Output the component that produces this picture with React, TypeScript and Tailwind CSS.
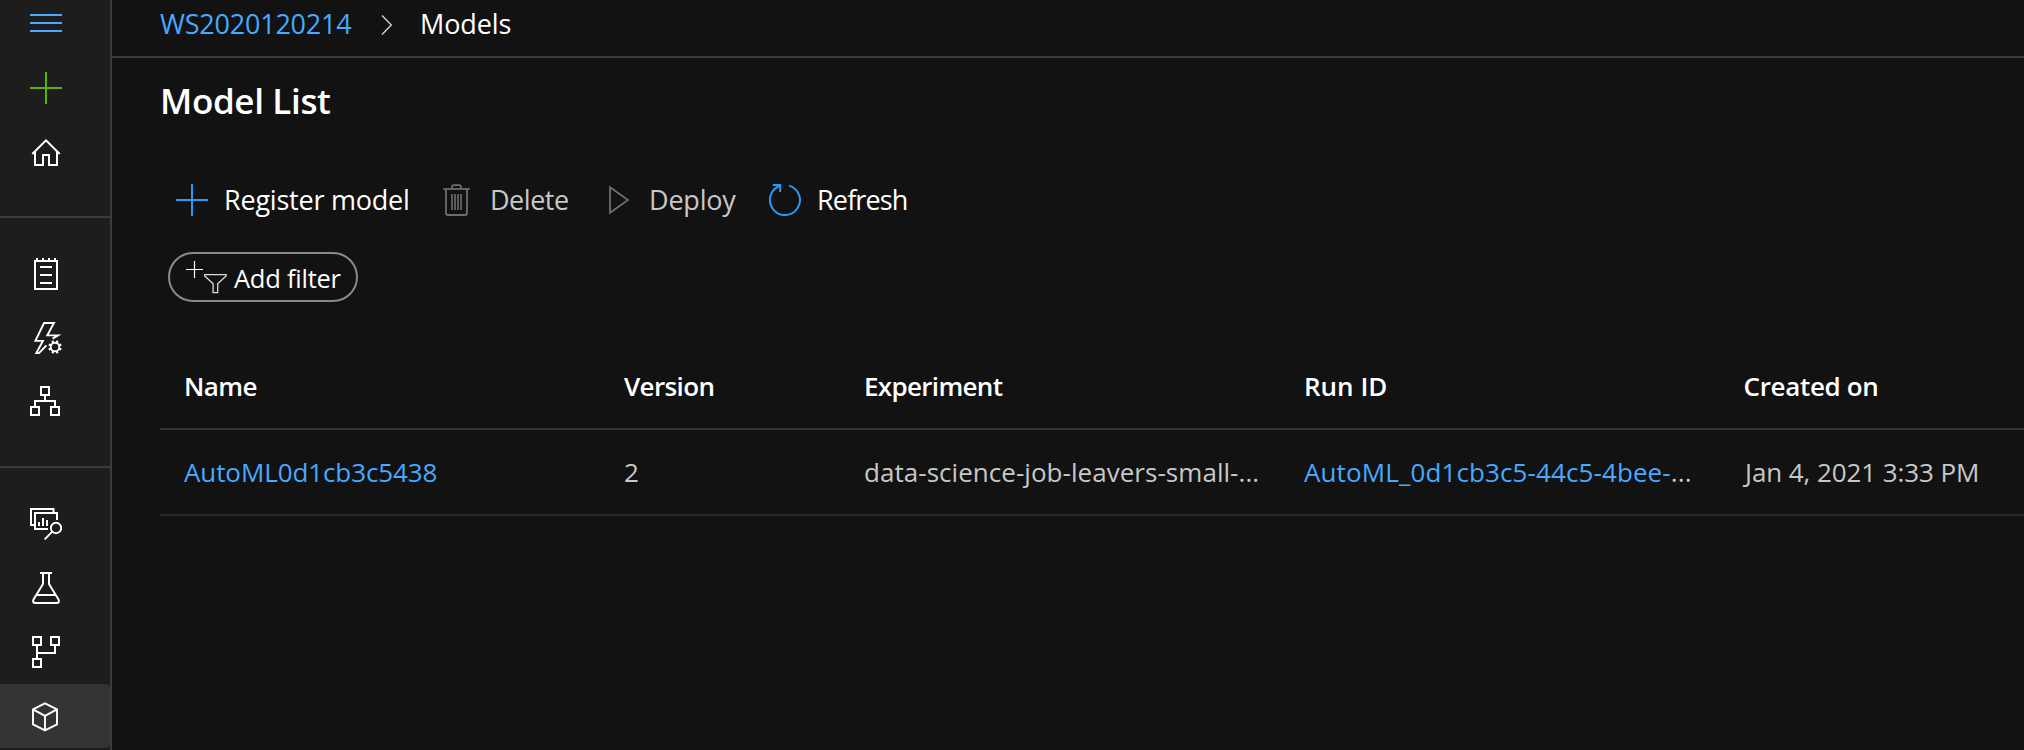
import React, { type ReactNode } from "react";

type IconProps = { children: ReactNode; className?: string; width?: number };

function Icon({ children, className = "text-white", width = 2 }: IconProps) {
  return (
    <svg
      viewBox="0 0 32 32"
      className={`size-8 shrink-0 ${className}`}
      fill="none"
      stroke="currentColor"
      strokeWidth={width}
    >
      {children}
    </svg>
  );
}

const MenuIcon = () => (
  <Icon className="text-[#47a9ff]">
    <path d="M0 8H32M0 16H32M0 24H32" />
  </Icon>
);

const PlusIcon = ({ className }: { className: string }) => (
  <Icon className={className}>
    <path d="M16 0V32M0 16H32" />
  </Icon>
);

const HomeIcon = () => (
  <Icon>
    <path d="M2.3 18L16 4.3L29.7 18" />
    <path d="M5 15.5V29H13V19H19V29H27V15.5" />
  </Icon>
);

const NotebookIcon = () => (
  <Icon>
    <path d="M5 3H27V31H5Z" />
    <path d="M7 0V3M13 0V3M19 0V3M25 0V3" />
    <path d="M10 9H22M10 17H22M10 25H22" />
  </Icon>
);

const TEETH = [22.5, 67.5, 112.5, 157.5, 202.5, 247.5, 292.5, 337.5];

const AutomatedIcon = () => (
  <Icon width={1.9}>
    <path d="M22.6 16.6L28 13.4H17.3L24 1H14L5.4 18.9H12.9L6.3 31.1H9L16.4 23.4" />
    <circle cx="25" cy="25" r="4.3" />
    {TEETH.map((a) => (
      <path key={a} d="M25 20.6V18.2" strokeWidth="2.2" transform={`rotate(${a} 25 25)`} />
    ))}
  </Icon>
);

const DesignerIcon = () => (
  <Icon>
    <path d="M11 1H19V9H11ZM1 21H9V29H1ZM21 21H29V29H21ZM15 9V15M5 21V15H25V21" />
  </Icon>
);

const DatasetIcon = () => (
  <Icon>
    <path d="M23.5 4V1H1V17H4" />
    <path d="M27 12V5H5V21H18" />
    <path d="M9 14V18M13 10V18M17 12V18" />
    <circle cx="26" cy="20" r="5.2" strokeWidth="1.9" />
    <path d="M22.3 23.7L14.6 31.4" strokeWidth="1.9" />
  </Icon>
);

const FlaskIcon = () => (
  <Icon>
    <path d="M10 1H22" />
    <path d="M13 1V12L3.5 27.6C2.5 29.4 3.3 31 5.3 31H26.7C28.7 31 29.5 29.4 28.5 27.6L19 12V1" />
    <path d="M6.5 23H25.5" />
  </Icon>
);

const PipelineIcon = () => (
  <Icon>
    <path d="M3 1H11V9H3ZM21 1H29V9H21ZM3 23H11V31H3ZM7 9V23M7 17H25V9" />
  </Icon>
);

const CubeIcon = () => (
  <Icon width={1.9}>
    <path d="M15 3.4L27 9.4V24.4L15 30.4L3 24.4V9.4ZM3 9.4L15 15.8L27 9.4M15 15.8V30.4" />
  </Icon>
);

const TrashIcon = () => (
  <Icon className="text-[#6e6e6e]" width={1.8}>
    <path d="M2.3 5H28.7" />
    <path d="M11 5V3.2Q11 1.2 13 1.2H18Q20 1.2 20 3.2V5" />
    <path d="M5 5V29Q5 31 7 31H24Q26 31 26 29V5" />
    <path d="M11 10V26M14 10V26M17 10V26M20 10V26" strokeWidth="1.6" />
  </Icon>
);

const PlayIcon = () => (
  <Icon className="text-[#6e6e6e]" width={1.8}>
    <path d="M2 3.3V28.7L20 16Z" />
  </Icon>
);

const RefreshIcon = () => (
  <Icon className="text-[#2899f5]" width={2}>
    <path d="M20 1.6A15 15 0 1 1 11.2 1.8" />
    <path d="M3.8 1H11.2V8" />
  </Icon>
);

const AddFilterIcon = () => (
  <svg viewBox="0 0 42 34" className="h-[34px] w-[42px] shrink-0" fill="none" stroke="#fff">
    <path d="M9.5 1V18M1 9.5H18" strokeWidth="1.2" />
    <path d="M19.7 14.7H41.1V16L32.7 23.8V32.6H28.1V23.8L19.7 16Z" stroke="#dcdcdc" strokeWidth="1.3" />
  </svg>
);

function NavItem({ children, selected = false }: { children: ReactNode; selected?: boolean }) {
  return (
    <li
      className={`flex h-16 items-center rounded-r-[4px] pl-[30px] ${selected ? "bg-[#343434]" : ""}`}
    >
      {children}
    </li>
  );
}

function Sidebar() {
  return (
    <nav className="w-28 shrink-0 border-r-2 border-[#3b3b3b] bg-[#1d1d1d]">
      <ul className="h-[218px] border-b-2 border-[#3b3b3b]">
        <li className="flex h-14 pt-[7px] pl-[30px]">
          <MenuIcon />
        </li>
        <NavItem>
          <PlusIcon className="text-[#5fb300]" />
        </NavItem>
        <NavItem>
          <HomeIcon />
        </NavItem>
      </ul>
      <ul className="h-[250px] border-b-2 border-[#3b3b3b] pt-6">
        <NavItem>
          <NotebookIcon />
        </NavItem>
        <NavItem>
          <AutomatedIcon />
        </NavItem>
        <NavItem>
          <DesignerIcon />
        </NavItem>
      </ul>
      <ul className="pt-6">
        <NavItem>
          <DatasetIcon />
        </NavItem>
        <NavItem>
          <FlaskIcon />
        </NavItem>
        <NavItem>
          <PipelineIcon />
        </NavItem>
        <NavItem selected>
          <CubeIcon />
        </NavItem>
      </ul>
    </nav>
  );
}

function Breadcrumb() {
  return (
    <header className="flex h-[58px] shrink-0 border-b-2 border-[#3b3b3b] pl-12 text-[27px]">
      <div className="flex h-[49px] items-center">
        <a className="w-[221px] tracking-[-0.22px] text-[#47a9ff]">WS2020120214</a>
        <svg viewBox="0 0 12 20" className="h-5 w-3" fill="none" stroke="#d0d0d0" strokeWidth="1.4">
          <path d="M1 0.5L10.3 10L1 19.5" />
        </svg>
        <span className="ml-[27px] tracking-[-0.1px]">Models</span>
      </div>
    </header>
  );
}

function Toolbar() {
  return (
    <div className="mt-[43px] flex h-16 items-center pl-4 text-[27px]">
      <button className="flex w-[265px] items-center gap-4">
        <PlusIcon className="text-[#2899f5]" />
        <span className="tracking-[-0.22px]">Register model</span>
      </button>
      <button className="flex w-[167px] items-center gap-[17px] text-[#c8c8c8]">
        <TrashIcon />
        <span className="tracking-[-0.47px]">Delete</span>
      </button>
      <button className="flex w-[161px] items-center gap-[9px] text-[#c8c8c8]">
        <PlayIcon />
        <span className="tracking-[-0.2px]">Deploy</span>
      </button>
      <button className="flex items-center gap-4">
        <RefreshIcon />
        <span className="tracking-[-0.85px]">Refresh</span>
      </button>
    </div>
  );
}

const GRID = "grid grid-cols-[440px_240px_440px_440px_440px] items-center h-[86px] border-b-2 text-[26px]";

function ModelTable() {
  return (
    <div className="mt-[42px] w-[2000px]">
      <div className={`${GRID} border-[#363636] font-semibold text-white`}>
        <div className="pl-[24px] tracking-[-0.6px]">Name</div>
        <div className="pl-[24px] tracking-[-0.61px]">Version</div>
        <div className="pl-[24px] tracking-[-0.68px]">Experiment</div>
        <div className="pl-[24px]">Run ID</div>
        <div className="pl-[23.5px] tracking-[-0.33px]">Created on</div>
      </div>
      <div className={`${GRID} border-[#272727] text-[#c8c8c8]`}>
        <div className="pl-[24px] tracking-[-0.1px] text-[#47a9ff]">AutoML0d1cb3c5438</div>
        <div className="pl-[24px]">2</div>
        <div className="pl-[24px] tracking-[0.04px]">data-science-job-leavers-small-...</div>
        <div className="pl-[24px] tracking-[0.11px]">
          <a className="text-[#47a9ff]">AutoML_0d1cb3c5-44c5-4bee-</a>...
        </div>
        <div className="pl-[25px] tracking-[-0.08px]">Jan 4, 2021 3:33 PM</div>
      </div>
    </div>
  );
}

export default function App() {
  return (
    <div className="flex h-[750px] w-[2024px] overflow-hidden bg-[#121212] font-['Open_Sans',sans-serif] whitespace-nowrap text-white">
      <Sidebar />
      <main className="flex min-w-0 flex-1 flex-col overflow-hidden">
        <Breadcrumb />
        <section className="pl-12">
          <h1 className="mt-[19px] h-12 text-[35px] leading-[48px] font-semibold tracking-[-0.35px]">
            Model List
          </h1>
          <Toolbar />
          <button className="mt-[20px] ml-2 flex h-[50px] w-[190px] items-center rounded-full border-2 border-[#8a8a8a] pl-[15px] text-[26px]">
            <AddFilterIcon />
            <span className="ml-[7px] pt-[2px] text-[25.5px] tracking-[-0.25px]">Add filter</span>
          </button>
          <ModelTable />
        </section>
      </main>
    </div>
  );
}
